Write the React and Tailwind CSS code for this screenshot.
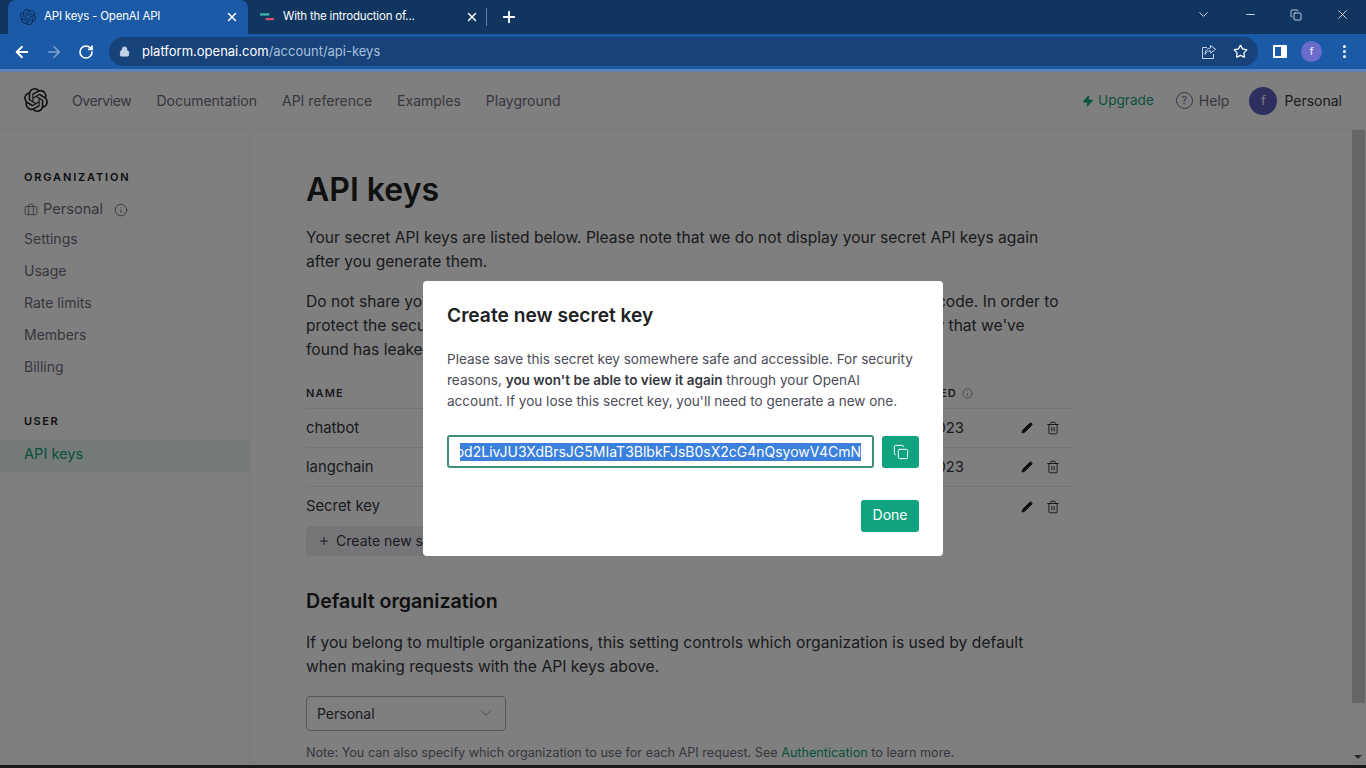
import React from "react";
import { SiOpenai } from "react-icons/si";
import { ArrowLeft, ArrowRight, RotateCw, Lock, Star, X, Plus, ChevronDown, Minus, Zap, Info, Briefcase, Pencil, Trash2, Copy } from "lucide-react";

function Tab({ active, icon, title }) {
  return (
    <div className={"relative flex h-full w-[240px] items-center gap-[8px] pl-[12px] pr-[9px] text-[11.5px] tracking-[-0.2px] text-white " + (active ? "rounded-t-lg bg-[#1a5aa6]" : "")}>
      {icon}
      <span className="flex-1 truncate">{title}</span>
      <X size={14} strokeWidth={2.5} />
    </div>
  );
}

const sideItems = ["Settings", "Usage", "Rate limits", "Members", "Billing"];

function Row({ name, date, border }) {
  return (
    <div className={"flex h-[39px] items-center text-[14.8px] text-[#353740] " + (border ? "border-b border-[#e8e8ea]" : "")}>
      <span className="w-[600px] shrink-0">{name}</span>
      <span className="w-[58px] shrink-0 text-right">{date}</span>
      <span className="ml-[57px] flex shrink-0 items-center gap-[13px] text-[#202123]">
        <Pencil size={12} fill="currentColor" />
        <Trash2 size={14} strokeWidth={1.5} />
      </span>
    </div>
  );
}

export default function App() {
  return (
    <div className="flex h-screen w-[1366px] flex-col overflow-hidden bg-[#1a1a1a] font-['Inter',sans-serif]">
      {/* tab strip */}
      <div className="flex h-[34px] shrink-0 items-end bg-[#10355f] pl-[8px]">
        <Tab active title="API keys - OpenAI API" icon={<SiOpenai size={16} className="text-[#0e2f5c]" />} />
        <Tab title="With the introduction of..." icon={
          <svg width="15" height="10" viewBox="0 0 16 10"><rect x="0" y="1" width="10" height="2.5" fill="#3fb5a8" /><rect x="6" y="6" width="9" height="2.5" fill="#c9566f" /></svg>
        } />
        <div className="-ml-[2px] mb-[8px] h-[18px] w-px bg-[#5d7ea8]" />
        <Plus size={18} strokeWidth={2.5} className="mb-[8px] ml-[13px] text-white" />
        <div className="mb-[12px] ml-auto flex w-[170px] items-center justify-between pr-[16px] text-[#e6edf6]">
          <ChevronDown size={15} strokeWidth={1.4} />
          <Minus size={13} strokeWidth={1.6} />
          <Copy size={12} strokeWidth={1.6} />
          <X size={15} strokeWidth={1.4} />
        </div>
      </div>
      {/* toolbar */}
      <div className="flex h-[38px] shrink-0 items-center border-b-[3px] border-[#5f82b6] bg-[#1a5aa6] pl-[13px] text-white">
        <ArrowLeft size={18} strokeWidth={2.5} />
        <ArrowRight size={18} strokeWidth={2} className="ml-[14px] text-[#86a6d0]" />
        <RotateCw size={16} strokeWidth={2.5} className="ml-[15px]" />
        <div className="ml-[15px] flex h-[29px] w-[1149px] items-center rounded-full bg-[#17427a] pl-[10px] pr-[10px]">
          <Lock size={11} fill="#c5d3e6" className="text-[#c5d3e6]" />
          <span className="ml-[12px] text-[13px] text-white">platform.openai.com<span className="text-[#a9c0dd]">/account/api-keys</span></span>
          <svg width="16" height="16" viewBox="0 0 16 16" fill="none" stroke="#c5d3e6" strokeWidth="1" className="ml-auto">
            <path d="M6 3.5H1.5v11h11V10" />
            <path d="M9.5 1.5l5 3.8-5 3.8V6.8C7 6.8 5 8 4 10.5c0-4 2.2-6.2 5.5-6.5z" />
          </svg>
          <Star size={15} strokeWidth={2} className="ml-[16px] text-white" />
        </div>
        <div className="ml-[15px] h-[13px] w-[14px] rounded-[1px] border-2 border-r-[6px] border-white" />
        <div className="ml-[14px] flex h-[21px] w-[21px] items-center justify-center rounded-full bg-[#6a6cc9] text-[10px] text-white">f</div>
        <div className="ml-[21px] flex flex-col gap-[2px]">
          <i className="h-[3px] w-[3px] rounded-full bg-white" />
          <i className="h-[3px] w-[3px] rounded-full bg-white" />
          <i className="h-[3px] w-[3px] rounded-full bg-white" />
        </div>
      </div>
      {/* page */}
      <div className="relative flex min-h-0 flex-1 flex-col overflow-hidden bg-white">
        <header className="flex h-[58px] shrink-0 items-center border-b border-[#f3f3f5] px-[24px] text-[14px] text-[#6e6e80]">
          <SiOpenai size={24} className="-mt-[1px] text-[#202123]" />
          <nav className="-mt-[1px] ml-[24px] flex gap-[25px]">
            <span className="tracking-[-0.4px]">Overview</span><span>Documentation</span><span>API reference</span><span>Examples</span><span>Playground</span>
          </nav>
          <div className="ml-auto flex items-center">
            <Zap size={12} fill="#10a37f" className="text-[#10a37f]" />
            <span className="ml-[4px] text-[13.6px] text-[#10a37f]">Upgrade</span>
            <span className="ml-[22px] flex h-[17px] w-[17px] items-center justify-center rounded-full border border-[#6e6e80] text-[11px]">?</span>
            <span className="ml-[6px]">Help</span>
            <span className="ml-[20px] flex h-[28px] w-[28px] items-center justify-center rounded-full bg-[#5d5fbd] text-[12px] text-white">f</span>
            <span className="ml-[7px] text-[#353740]">Personal</span>
          </div>
        </header>
        <div className="flex min-h-0 flex-1">
          <aside className="w-[250px] shrink-0 border-r border-[#f3f3f5] pt-[40px] text-[14px] text-[#6e6e80]">
            <div className="px-[24px] text-[11px] font-semibold leading-[14px] tracking-[1.85px] text-[#202123]">ORGANIZATION</div>
            <div className="mt-[16px] flex h-[20px] items-center px-[24px]">
              <Briefcase size={14} strokeWidth={1.5} />
              <span className="ml-[5px] text-[14.6px]">Personal</span>
              <Info size={14} strokeWidth={1.5} className="ml-[11px]" />
            </div>
            {sideItems.map((s, i) => (
              <div key={s} className={"flex h-[32px] items-center px-[24px] " + (i === 0 ? "mt-[2px]" : "")}>{s}</div>
            ))}
            <div className="mt-[32px] px-[24px] text-[11px] font-semibold leading-[14px] tracking-[1.5px] text-[#202123]">USER</div>
            <div className="mt-[12px] flex h-[32px] items-center bg-[#e6f5f1] px-[24px] pb-[2px] text-[14.6px] text-[#10a37f]">API keys</div>
          </aside>
          <main className="min-w-0 flex-1 pl-[56px] pt-[41px]">
            <h1 className="text-[32px] font-semibold leading-[38px] text-[#202123]">API keys</h1>
            <div className="mt-[17px] w-[756px] text-[15.6px] leading-[24px] text-[#353740]">
              <p>Your secret API keys are listed below. Please note that we do not display your secret API keys again after you generate them.</p>
              <p className="mt-[16px]">Do not share your API key with others, or expose it in the browser or other client-side code. In order to protect the security of your account, OpenAI may also automatically rotate any API key that we've found has leaked publicly.</p>
            </div>
            <div className="mt-[18px] w-[765px]">
              <div className="flex h-[29px] items-center border-b border-[#e8e8ea] pb-[2px] text-[11px] font-semibold tracking-[1.2px] text-[#353740]">
                <span className="w-[551px] shrink-0">NAME</span>
                <span className="w-[100px] shrink-0 whitespace-nowrap text-right">LAST USED</span>
                <Info size={11} className="ml-[5px] text-[#8e8ea0]" />
              </div>
              <Row name="chatbot" date="2023" border />
              <Row name="langchain" date="2023" border />
              <Row name="Secret key" date="" />
            </div>
            <div className="flex h-[30px] w-[190px] items-center gap-[6px] rounded bg-[#ececf1] px-[12px] pb-[1px] text-[14px] text-[#353740]">
              <Plus size={14} strokeWidth={2} />
              <span className="whitespace-nowrap">Create new secret key</span>
            </div>
            <h2 className="mt-[33px] text-[19.6px] font-semibold leading-[24px] text-[#202123]">Default organization</h2>
            <p className="mt-[18px] w-[756px] text-[15.7px] leading-[24px] text-[#353740]">If you belong to multiple organizations, this setting controls which organization is used by default when making requests with the API keys above.</p>
            <div className="mt-[17px] flex h-[35px] w-[200px] items-center justify-between rounded border border-[#acacbe] px-[10px] pb-[1px] text-[14px] text-[#353740]">
              <span>Personal</span>
              <ChevronDown size={18} strokeWidth={1.2} className="text-[#8e8ea0]" />
            </div>
            <p className="mt-[14px] whitespace-nowrap text-[12.65px] leading-[16px] text-[#6e6e80]">Note: You can also specify which organization to use for each API request. See <span className="text-[#10a37f]">Authentication</span> to learn more.</p>
          </main>
          <div className="relative flex w-[15px] shrink-0 flex-col bg-[#fdfdfd]">
            <div className="ml-[1px] h-[573px] w-[13px] bg-[#cdcdcd]" />
            <div className="absolute bottom-[6px] left-[3px] h-0 w-0 border-x-[4px] border-t-[4px] border-x-transparent border-t-[#505050]" />
          </div>
        </div>
        {/* dim */}
        <div className="absolute inset-0 bg-black/50" />
        {/* dialog */}
        <div className="absolute left-[423px] top-[209px] h-[275px] w-[520px] rounded bg-white px-[24px] pt-[21px]">
          <h3 className="text-[19.2px] font-semibold leading-[26px] text-[#202123]">Create new secret key</h3>
          <p className="mt-[21px] w-[469px] text-[13.55px] leading-[21px] text-[#4b4c58]">
            Please save this secret key somewhere safe and accessible. For security reasons, <b className="font-semibold text-[#353740]">you won't be able to view it again</b> through your OpenAI account. If you lose this secret key, you'll need to generate a new one.
          </p>
          <div className="mt-[23px] flex items-center gap-[8px]">
            <div className="flex h-[33px] w-[428px] items-center justify-end overflow-hidden rounded-[3px] border-2 border-[#3f9079] pr-[11px]">
              <div className="flex w-[401px] shrink-0 justify-end overflow-hidden">
                <span className="whitespace-nowrap bg-[#3a80dc] text-[14px] leading-[18px] text-white">bd2LivJU3XdBrsJG5MIaT3BlbkFJsB0sX2cG4nQsyowV4CmN</span>
              </div>
            </div>
            <div className="flex h-[32px] w-[37px] items-center justify-center rounded-[3px] bg-[#10a37f] text-white">
              <Copy size={16} strokeWidth={1.5} />
            </div>
          </div>
          <div className="mt-[32px] flex justify-end">
            <div className="flex h-[32px] w-[58px] items-center justify-center rounded-[3px] bg-[#10a37f] pb-[3px] text-[14px] text-white">Done</div>
          </div>
        </div>
      </div>
      <div className="h-[3px] shrink-0 bg-[#1a1a1a]" />
    </div>
  );
}
